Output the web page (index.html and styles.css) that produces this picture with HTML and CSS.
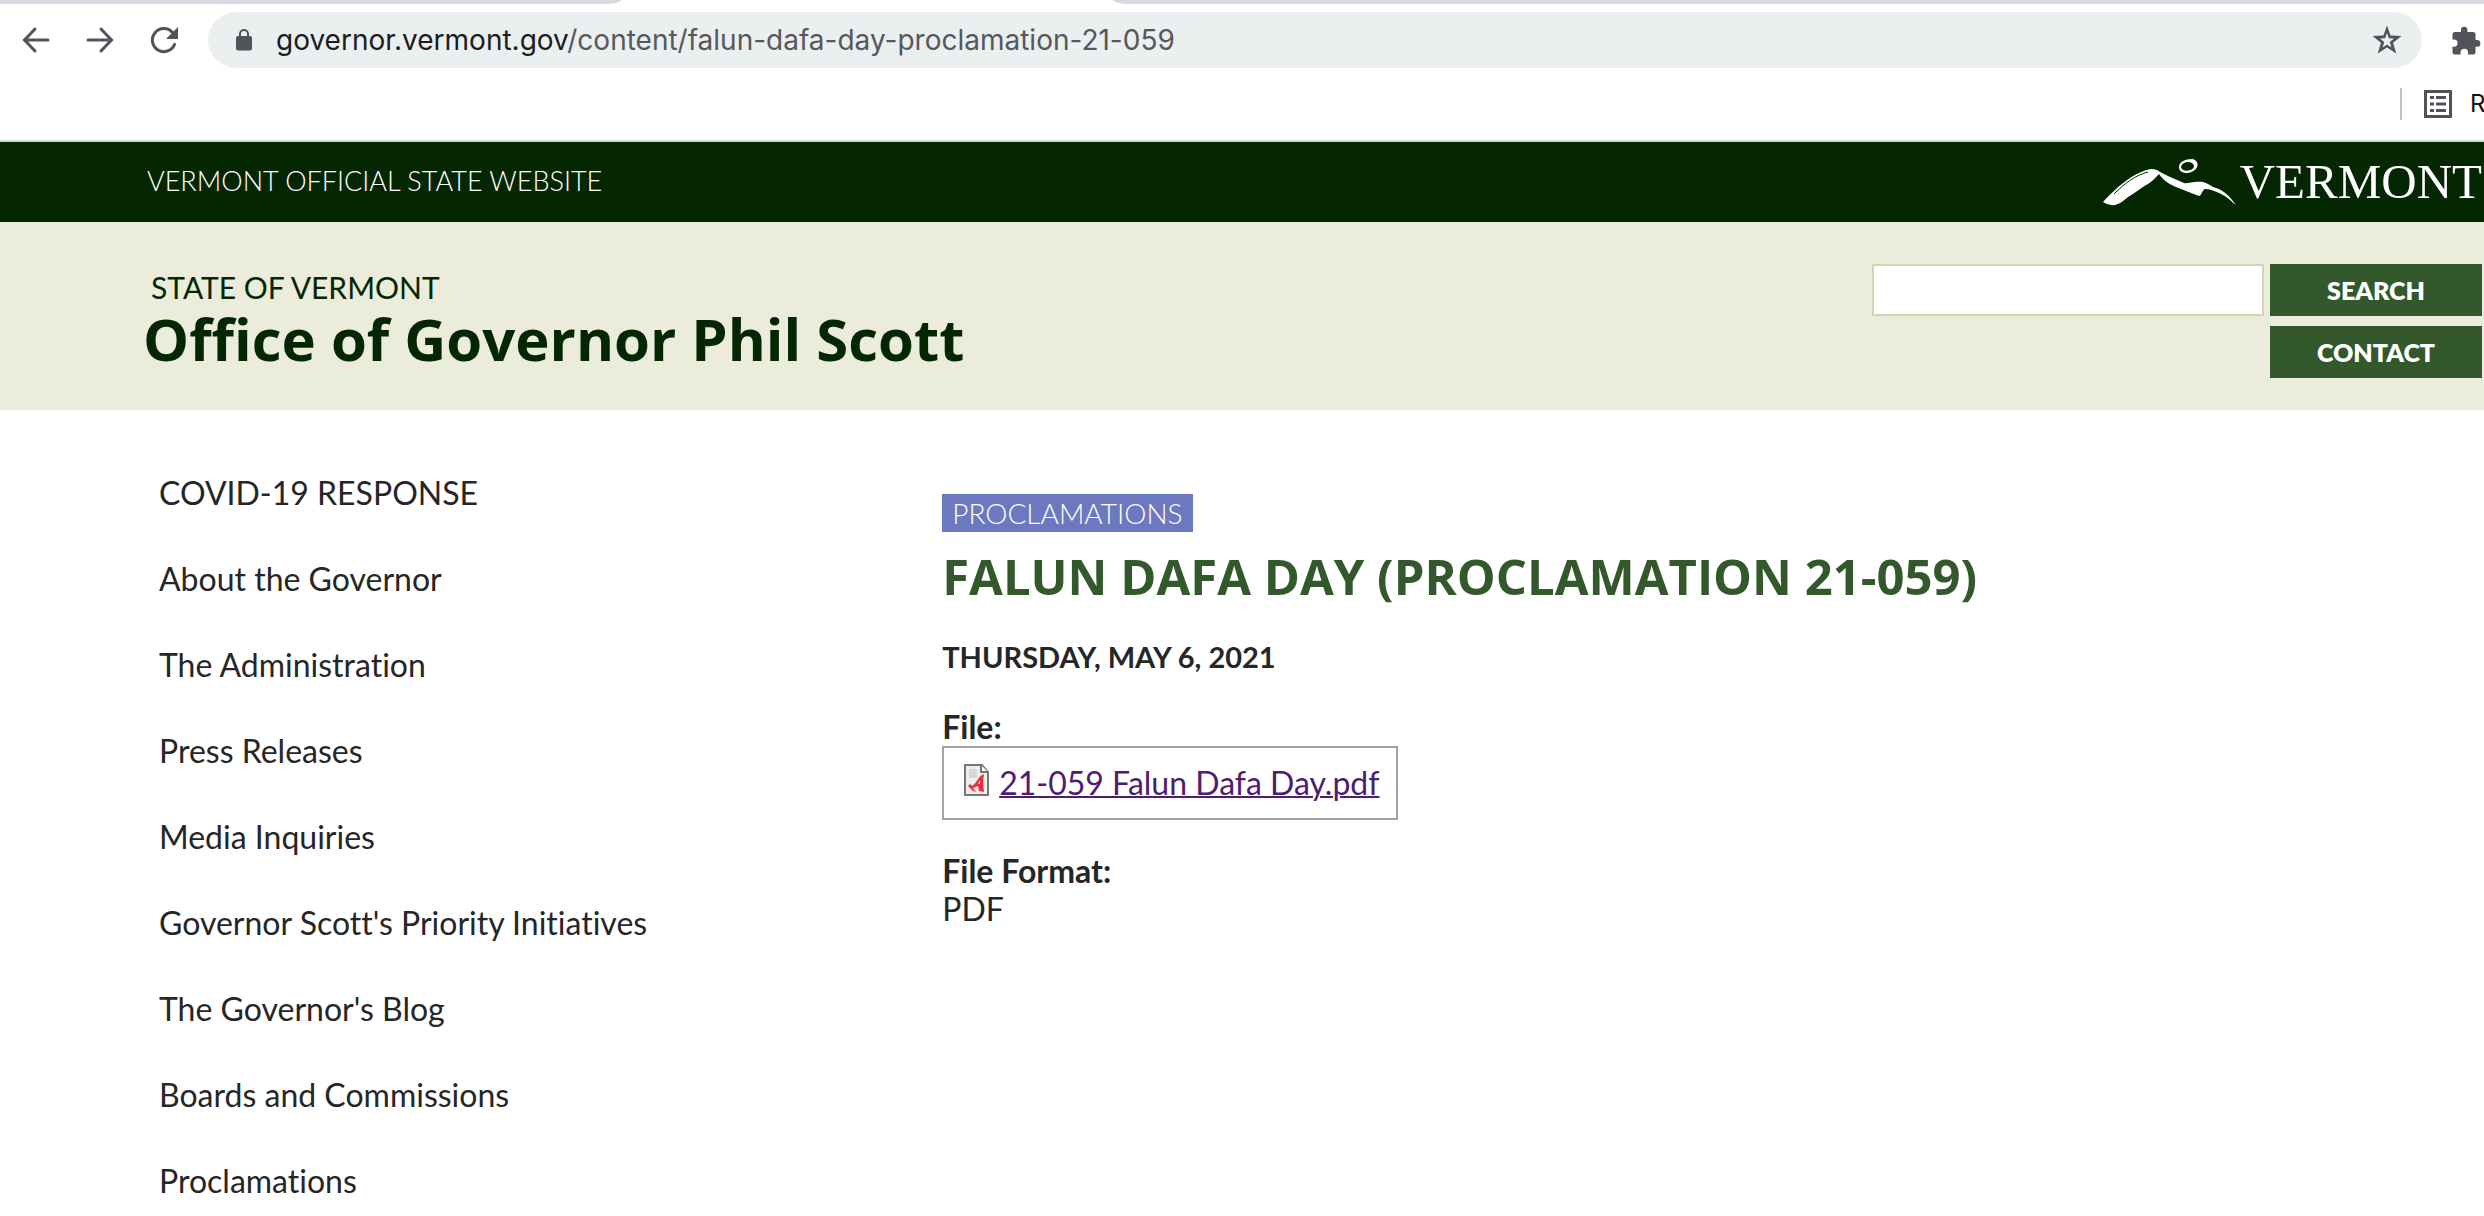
FILE: index.html
```html
<!DOCTYPE html>
<html lang="en">
<head>
<meta charset="utf-8">
<title>Falun Dafa Day (Proclamation 21-059)</title>
<link rel="stylesheet" href="styles.css">
</head>
<body>
<div class="browser">
  <div class="tabstrip"><span class="tab-edge tab-edge-left"></span><span class="tab-edge tab-edge-right"></span></div>
  <div class="toolbar">
    <div class="nav-buttons">
      <button class="icon-button" aria-label="Back"><svg width="28" height="28" viewBox="0 0 28 28" fill="none" stroke="#50535a" stroke-width="3" stroke-linecap="round"><path d="M26 14H3M13 3L2.500 14L13 25"/></svg></button>
      <button class="icon-button" aria-label="Forward"><svg width="28" height="28" viewBox="0 0 28 28" fill="none" stroke="#50535a" stroke-width="3" stroke-linecap="round"><path d="M2 14H25M15 3L25.500 14L15 25"/></svg></button>
      <button class="icon-button" aria-label="Reload"><svg width="28" height="28" viewBox="0 0 28 28"><path d="M24.500 18.500A11.500 11.500 0 1 1 22.500 6.500" fill="none" stroke="#50535a" stroke-width="3" stroke-linecap="round"/><path d="M28 1V13H16Z" fill="#50535a"/></svg></button>
    </div>
    <div class="omnibox">
      <svg width="16" height="22" viewBox="0 0 16 22"><rect y="7" width="16" height="14.500" rx="2" fill="#50535a"/><path d="M4 8V5a4 4 0 0 1 8 0V8" fill="none" stroke="#50535a" stroke-width="2"/></svg>
      <span class="url"><span class="host">governor.vermont.gov</span>/content/falun-dafa-day-proclamation-21-059</span>
      <button class="icon-button" aria-label="Bookmark this page"><svg width="30" height="30" viewBox="0 0 30 30"><path fill="#50535a" fill-rule="evenodd" d="M15 .5L18.600 10.500L29.500 11L21 17.800L24.300 28.500L15 22.500L5.700 28.500L9 17.800L.5 11L11.400 10.500ZM15 8L13.200 13.200L8 13.600L12.200 17L10.600 22.500L15 19.400L19.400 22.500L17.800 17L22 13.600L16.800 13.200Z"/></svg></button>
    </div>
    <button class="icon-button" aria-label="Extensions"><svg width="29" height="29" viewBox="0 0 29 29"><path fill="#50535a" d="M3 6H9V4a3.200 3.200 0 0 1 6.400 0V6H21a2.500 2.500 0 0 1 2.500 2.500V14H25a3.400 3.400 0 0 1 0 6.800H23.500V26A2.500 2.500 0 0 1 21 28.500H16V26.500a3.700 3.700 0 0 0-7.400 0V28.500H3A2.500 2.500 0 0 1 .500 26V20.700H2a3.600 3.600 0 0 0 0-7.200H.500V8.500A2.500 2.500 0 0 1 3 6Z"/></svg></button>
  </div>
  <div class="bookmarks">
    <span class="divider"></span>
    <svg width="28" height="28" viewBox="0 0 28 28"><rect x="1.500" y="1.500" width="25" height="25" fill="none" stroke="#50535a" stroke-width="3"/><path d="M6 7.500h4M12 7.500h10M6 14h4M12 14h10M6 20.500h4M12 20.500h10" stroke="#50535a" stroke-width="3"/></svg>
    <span class="bookmark-label">R</span>
  </div>
</div>
<div class="state-bar">
  <span class="official">VERMONT OFFICIAL STATE WEBSITE</span>
  <a class="brand" href="#">
    <svg width="136" height="48" viewBox="0 0 136 48"><path fill="#fff" d="M1 44C12 32 31 14 49 11C53 11 56 12 58 14L66 18L82 25C87 26 90 23 101 24C105 25 108 27 111 29C120 31 127 37 134 47C128 42 124 38 117 35C112 33 108 31 103 31C100 32 100 37 97 38L79 31C71 28 62 24 57 16C54 19 51 23 46 26C40 29 33 35 26 39C21 43 16 48 9 47L5 46Z"/><path d="M12 36C23 25 34 17 46 14" fill="none" stroke="#042702" stroke-width="1"/><path fill="#fff" fill-rule="evenodd" d="M77 9C77 4 83 1 90 1C98 2 98 13 86 15C80 15 77 13 77 9ZM79 9C80 15 92 13 92 8C91 2 80 3 79 9Z"/></svg>
    <span class="wordmark">VERMONT</span>
  </a>
</div>
<header class="site-header">
  <div class="titles">
    <p class="state-name">STATE OF VERMONT</p>
    <h1 class="site-name">Office of Governor Phil Scott</h1>
  </div>
  <form class="search">
    <input class="search-box" type="text" aria-label="Search">
    <div class="actions">
      <button class="action" type="button">SEARCH</button>
      <button class="action" type="button">CONTACT</button>
    </div>
  </form>
</header>
<div class="content">
  <nav class="side-nav">
    <a href="#">COVID-19 RESPONSE</a>
    <a href="#">About the Governor</a>
    <a href="#">The Administration</a>
    <a href="#">Press Releases</a>
    <a href="#">Media Inquiries</a>
    <a href="#">Governor Scott's Priority Initiatives</a>
    <a href="#">The Governor's Blog</a>
    <a href="#">Boards and Commissions</a>
    <a href="#">Proclamations</a>
  </nav>
  <main class="article">
    <span class="tag">PROCLAMATIONS</span>
    <h2 class="title">FALUN DAFA DAY (PROCLAMATION 21-059)</h2>
    <p class="date">THURSDAY, MAY 6, 2021</p>
    <p class="label">File:</p>
    <div class="file">
      <svg width="25" height="32" viewBox="0 0 25 32"><path d="M1 1H18L24 8V31H1Z" fill="#eee" stroke="#777" stroke-width="2"/><path d="M17 1V8H24" fill="#fff" stroke="#777" stroke-width="2"/><path d="M5 5H13V14H5Z" fill="#d8d8d8"/><path d="M20 10C19 15 19 21 20 28L15 27L14 22L9 24L12 28L9 27L4 22L6 20L8 22C13 19 14 12 20 10ZM16 16L14 20L16 20Z" fill="#e8313c"/></svg>
      <a href="#">21-059 Falun Dafa Day.pdf</a>
    </div>
    <p class="label">File Format:</p>
    <p class="value">PDF</p>
  </main>
</div>
</body>
</html>
```
FILE: styles.css
```css
* { box-sizing: border-box; }
body { margin: 0; background: #fff; color: #262626; font-family: Lato, "Liberation Sans", sans-serif; font-size: 32px; line-height: 38px; font-variant-ligatures: none; overflow: hidden; }
p, h1, h2 { margin: 0; }
svg { display: block; flex: none; }
.icon-button { display: block; padding: 0; border: 0; background: none; }

.browser { border-bottom: 2px solid #cfd4d8; font-family: Inter, Roboto, sans-serif; }
.tabstrip { display: flex; justify-content: space-between; height: 4px; }
.tab-edge { background: #d6d9e1; }
.tab-edge-left { width: 25%; border-bottom-right-radius: 16px 4px; }
.tab-edge-right { width: 55.2%; border-bottom-left-radius: 16px 4px; }
.toolbar { display: flex; align-items: center; padding: 8px 3px 0 22px; }
.nav-buttons { display: flex; gap: 36px; margin-right: 30px; }
.omnibox { display: flex; flex: 1; align-items: center; height: 56px; padding: 0 20px 0 28px; margin-right: 30px; border-radius: 28px; background: #ebeff0; }
.url { flex: 1; margin-left: 24px; color: #55585c; font-size: 28px; }
.host { color: #1b1c1e; }
.bookmarks { display: flex; justify-content: flex-end; align-items: center; height: 72px; }
.divider { width: 2px; height: 32px; margin-right: 22px; background: #c4c4c4; }
.bookmark-label { width: 14px; margin-left: 18px; overflow: hidden; color: #111; font-size: 24px; }

.state-bar { display: flex; align-items: center; justify-content: space-between; height: 80px; padding: 0 2px 0 147px; background: #042702; color: #fff; }
.official { padding-bottom: 3px; font-size: 27px; font-weight: 300; }
.brand { display: flex; align-items: center; gap: 2px; color: #fff; text-decoration: none; }
.wordmark { font-family: "Liberation Serif", serif; font-size: 49px; line-height: 56px; }

.site-header { display: flex; justify-content: space-between; padding: 42px 2px 32px 143px; background: #ebecdb; color: #042702; }
.titles { padding-top: 4px; }
.state-name { padding-left: 8px; font-size: 30px; }
.site-name { font-family: "Open Sans", sans-serif; font-size: 58px; font-weight: 700; line-height: 66px; }
.search { display: flex; align-items: flex-start; gap: 6px; }
.search-box { width: 392px; height: 52px; padding: 0 12px; border: 2px solid #d2d6b4; background: #fff; font: inherit; }
.actions { display: flex; flex-direction: column; gap: 10px; width: 212px; }
.action { height: 52px; padding: 0; border: 0; background: #32582c; color: #fff; font: 800 25px Lato, sans-serif; }

.content { display: grid; grid-template-columns: 11fr 18fr; }
.side-nav { display: flex; flex-direction: column; align-items: flex-start; gap: 48px; padding: 64px 20px 0 159px; }
.side-nav a { color: inherit; text-decoration: none; }
.article { padding-top: 84px; }
.tag { display: block; width: fit-content; padding: 0 10px; background: #6c78c0; color: #fff; font-size: 28px; font-weight: 300; }
.title { margin-top: 10px; color: #32582c; font-family: "Open Sans", sans-serif; font-size: 49px; font-weight: 700; line-height: 68px; }
.date { margin: 28px 0 32px; font-size: 29px; font-weight: 700; }
.label { font-weight: 700; }
.file { display: flex; gap: 10px; width: fit-content; margin-bottom: 32px; padding: 16px 16px 16px 20px; border: 2px solid #9ea3b0; }
.file a { color: #4e1c71; text-decoration-thickness: 2px; }
```
